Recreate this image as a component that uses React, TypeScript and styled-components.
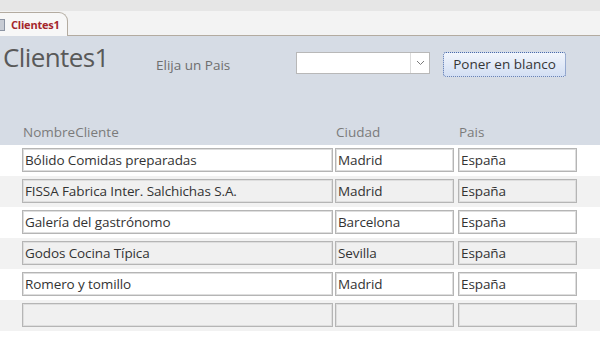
import styled, { createGlobalStyle } from "styled-components";

const GlobalStyle = createGlobalStyle`
  body {
    margin: 0;
    background: #ffffff;
    font-family: "Open Sans", "Noto Sans", sans-serif;
  }
`;

const Page = styled.div`
  width: 600px;
  height: 360px;
  overflow: hidden;
  background: #ffffff;
`;

const TopBand = styled.div`
  height: 11px;
  background: #e6e6e6;
`;

const TabStrip = styled.div`
  height: 24px;
  background: #f3f3f3;
  border-bottom: 1px solid #b3aba0;
  display: flex;
  align-items: flex-end;
`;

const Tab = styled.div`
  width: 68px;
  height: 24px;
  margin-bottom: -1px;
  box-sizing: border-box;
  background: #f7f7f7;
  border: 1px solid #b3aba0;
  border-left: none;
  border-bottom: none;
  border-top-right-radius: 9px;
  display: flex;
  align-items: center;
  gap: 6px;
`;

const TabIcon = styled.span`
  width: 4px;
  height: 10px;
  background: #c8ccd4;
  border: 1px solid #8c94a3;
  border-left: none;
`;

const TabLabel = styled.span`
  font-size: 11px;
  font-weight: 700;
  color: #a4262c;
  letter-spacing: -0.2px;
`;

const Header = styled.div`
  height: 109px;
  background: #d6dce5;
  display: flex;
  flex-direction: column;
`;

const TopRow = styled.div`
  display: flex;
  align-items: flex-start;
  padding-top: 6px;
  height: 78px;
  box-sizing: border-box;
`;

const Title = styled.h1`
  margin: 0 0 0 3px;
  width: 153px;
  font-size: 26px;
  font-weight: 400;
  line-height: 30px;
  color: #595959;
  letter-spacing: -0.6px;
`;

const Prompt = styled.span`
  margin-top: 14px;
  width: 140px;
  font-size: 13.5px;
  line-height: 18px;
  color: #6e6e6e;
`;

const Combo = styled.div`
  margin-top: 10px;
  width: 134px;
  height: 22px;
  box-sizing: border-box;
  background: #ffffff;
  border: 1px solid #b8b8b8;
  display: flex;
  justify-content: flex-end;
`;

const ComboButton = styled.span`
  width: 18px;
  border-left: 1px solid #dcdcdc;
  display: flex;
  align-items: center;
  justify-content: center;
`;

const Button = styled.button`
  margin: 10px 0 0 13px;
  width: 123px;
  height: 25px;
  padding: 0 0 1px;
  box-sizing: border-box;
  font-family: inherit;
  font-size: 13.5px;
  color: #363636;
  background: linear-gradient(#f1f5fc, #d3dff3);
  border: 1px dotted #4a6aa8;
  border-radius: 3px;
`;

const Grid = styled.div`
  display: grid;
  grid-template-columns: 313px 123px 119px;
  padding-left: 22px;
`;

const LabelRow = styled(Grid)`
  height: 31px;
  align-items: center;
  padding-top: 4px;
  box-sizing: border-box;
`;

const ColumnLabel = styled.span`
  font-size: 13.5px;
  color: #7b7b7b;
  padding-left: 1px;
`;

const DataRow = styled(Grid)<{ $alt: boolean }>`
  height: 31px;
  padding-top: 3px;
  box-sizing: border-box;
  background: ${(p) => (p.$alt ? "#f2f2f2" : "#ffffff")};
`;

const Field = styled.div<{ $w: number; $alt: boolean }>`
  width: ${(p) => p.$w}px;
  height: 24px;
  box-sizing: border-box;
  padding: 0 2px;
  border: 1px solid #b5b5b5;
  box-shadow: inset 0 0 0 1px #dedede;
  background: ${(p) => (p.$alt ? "#f0f0f0" : "#ffffff")};
  font-size: 13.5px;
  line-height: 22px;
  color: #333333;
  white-space: nowrap;
  overflow: hidden;
  letter-spacing: -0.1px;
`;

const clientes = [
  ["Bólido Comidas preparadas", "Madrid", "España"],
  ["FISSA Fabrica Inter. Salchichas S.A.", "Madrid", "España"],
  ["Galería del gastrónomo", "Barcelona", "España"],
  ["Godos Cocina Típica", "Sevilla", "España"],
  ["Romero y tomillo", "Madrid", "España"],
  ["", "", ""],
];

const widths = [311, 119, 119];

export default function App() {
  return (
    <Page>
      <GlobalStyle />
      <TopBand />
      <TabStrip>
        <Tab>
          <TabIcon />
          <TabLabel>Clientes1</TabLabel>
        </Tab>
      </TabStrip>
      <Header>
        <TopRow>
          <Title>Clientes1</Title>
          <Prompt>Elija un Pais</Prompt>
          <Combo>
            <ComboButton>
              <svg width="9" height="6" viewBox="0 0 9 6">
                <path d="M1 1l3.5 3.5L8 1" fill="none" stroke="#7a7a7a" strokeWidth="1" />
              </svg>
            </ComboButton>
          </Combo>
          <Button>Poner en blanco</Button>
        </TopRow>
        <LabelRow>
          <ColumnLabel>NombreCliente</ColumnLabel>
          <ColumnLabel>Ciudad</ColumnLabel>
          <ColumnLabel>Pais</ColumnLabel>
        </LabelRow>
      </Header>
      {clientes.map((row, i) => (
        <DataRow key={i} $alt={i % 2 === 1}>
          {row.map((v, j) => (
            <Field key={j} $w={widths[j]} $alt={i % 2 === 1}>
              {v}
            </Field>
          ))}
        </DataRow>
      ))}
    </Page>
  );
}
